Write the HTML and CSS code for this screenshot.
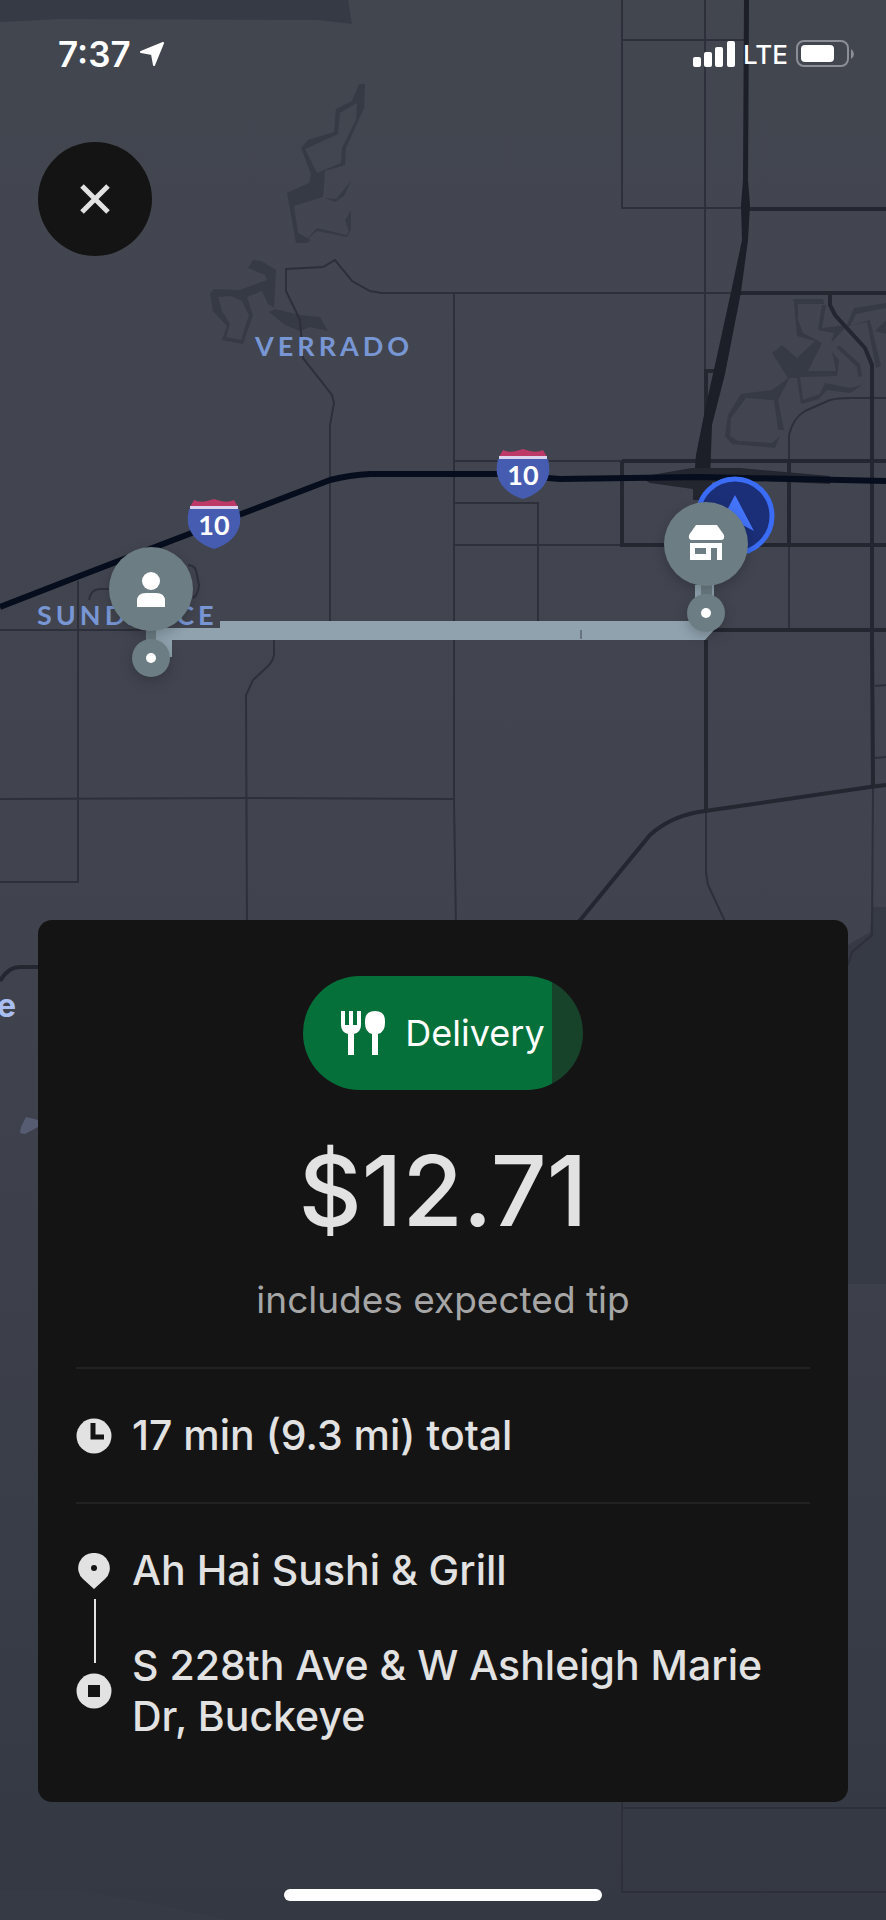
FILE: index.html
```html
<!DOCTYPE html>
<html lang="en">
<head>
  <meta charset="UTF-8">
  <title>Delivery offer</title>
  <meta name="viewport" content="width=device-width, initial-scale=1">
  <link rel="stylesheet" href="styles.css">
</head>
<body>
  <div class="screen">

    <svg class="map" viewBox="0 0 886 1920" preserveAspectRatio="xMidYMin slice" role="img" aria-label="Route map">
      <defs>
        <linearGradient id="ground" x1="0" y1="0" x2="0" y2="1">
          <stop offset="0" stop-color="#42464f"/>
          <stop offset="0.45" stop-color="#41444f"/>
          <stop offset="0.8" stop-color="#393d47"/>
          <stop offset="1" stop-color="#343842"/>
        </linearGradient>
        <symbol id="shield" viewBox="0 0 54 54" overflow="visible">
          <path d="M3 8 L7 1 Q13 4 20 2 Q24 1 27 0 Q30 1 34 2 Q41 4 47 1 L51 8z" fill="#bd3a68"/>
          <path d="M3 7H51V10H3z" fill="#dcd3ee"/>
          <path d="M2 10H52Q54 18 53 25Q49 43 27 50Q5 43 1 25Q0 18 2 10z" fill="#465cb1"/>
          <text x="27" y="36" class="shield-text">10</text>
        </symbol>
      </defs>
      <rect width="886" height="1920" fill="url(#ground)"/>

      <!-- parks and hills -->
      <g class="land">
        <path d="M0 0H348L352 24L318 20L60 19L0 22z"/>
        <path d="M0 1891H85L150 1903L230 1920H0z"/>
        <path d="M872 907H886V1284H848V945L870 932z"/>
        <path d="M359 84L365 84L364 108L346 148L345 165L325 171L323 197L294 206L298 233L311 240L307 243L296 243L287 193L309 183L311 174L301 148L308 140L334 132L336 109L352 101zM357 103L340 113L338 134L305 149L317 173L341 163L342 148L356 120z" fill-rule="evenodd"/>
        <path d="M306 240L317 231L347 237L351 230V210L345 220L349 232L346 235L317 228zM325 198L336 199L351 181L344 196L335 202z"/>
        <path d="M248 268L253 260L261 261L276 270L274 308L268 304L262 291L247 297L253 315L243 344L222 340L227 326L213 311L210 293L214 289L240 290L267 280L265 275zM218 297L222 311L230 324L226 337L241 340L249 315L242 301L231 296z" fill-rule="evenodd"/>
        <path d="M269 312L275 309L300 315L320 317L328 331L310 327L300 331L285 325z"/>
        <path d="M772 353L782 345L797 358L815 341L797 336L794 303L793 299H823L824 304H798V320L803 333L822 343L808 371L836 371L832 352L839 360L837 376L800 377L803 400L820 394L825 383L850 388L862 385L850 393L827 390L819 399L801 404L797 378L788 378z"/>
        <path d="M790 377L778 400L784 430L778 430L774 400L746 398L731 418L730 436L738 441L772 443L780 436L775 448L732 444L725 436L728 415L741 394L772 390z"/>
        <path d="M822 305L818 330L834 333L831 343L846 327L867 322L876 368L881 366L870 320L866 321L850 326L856 314L886 308V303L854 308L847 325L822 328L826 305zM836 347L857 367L858 377L862 376L860 364L840 346zM875 331L886 320V334z"/>
      </g>
      <path d="M26 1117L38 1120V1127L25 1134L20 1133L21 1127z" fill="#565c72"/>

      <!-- streets -->
      <g class="street">
        <path d="M622 0V208H745M622 40H746M705 0V292M705 292V372"/>
        <path d="M736 293H381L370 291L352 281L335 260L323 267L286 269V291L300 320L303 358L332 395L334 403L330 425V621"/>
        <path d="M454 293V800L456 930M454 461H622M454 503H538V621M454 545H622"/>
        <path d="M0 630H150M78 581V882H0M0 799L247 798L454 799"/>
        <path d="M274 640V655Q273 661 268 666L253 680L246 695L247 930"/>
        <path d="M789 630V435Q793 418 805 411L830 400Q838 398 850 398H886"/>
        <path d="M89 600Q91 589 100 589H110M188 565Q196 565 197 575L199 585Q198 595 193 598"/>
        <path d="M875 686L886 685M875 758L886 757M873 786L872 935L852 952L848 965"/>
        <path d="M706 812V873L708 885L729 930"/>
        <path d="M622 1790V1892H886M622 1808H886"/>
      </g>
      <g class="road">
        <path d="M745 209H886M740 293H886"/>
        <path d="M830 293V305L835 315L865 348L872 365V640L873 786"/>
        <path d="M622 461H886M622 461V545H886M789 461V545M706 630H886"/>
        <path d="M706 640V811M886 785L870 787L705 811Q672 815 650 835L572 930"/>
        <path d="M722 371H706V425L703 455"/>
        <path d="M0 981Q8 967 20 967H40"/>
      </g>
      <path d="M744 0H749L748 180L750 205L748 240L741 292L725 374L712 425L710 480H694L696 455L706 405L715 365L731 292L742 240L741 205L743 180z" fill="#1c1e28"/>
      <path d="M640 477L692 468H740L830 476V484L740 480L712 482V500H693V489L650 483z" fill="#23252f"/>
      <path class="freeway" d="M0 607L77 577L330 480Q350 475 370 474H498L560 479L700 477L886 481"/>

      <!-- labels and route -->
      <text x="255" y="356" class="area">VERRADO</text>
      <path d="M220 621H690L695 610V585H714V630L705 640H172V657H158L154 628H220z" fill="#8fa2ae"/>
      <path d="M581 630V639" stroke="#41454f"/>
      <text x="37" y="625" class="area">SUNDANCE</text>
      <text x="16" y="1017" class="city">e</text>
      <use href="#shield" x="187" y="499" width="54" height="54"/>
      <use href="#shield" x="496" y="449" width="54" height="54"/>

      <!-- driver -->
      <circle cx="735" cy="516" r="37" fill="#1b2f78" stroke="#3a6cf5" stroke-width="5"/>
      <path d="M735 495L754 531L735 521L716 531z" fill="#4474fb"/>

      <!-- customer pin -->
      <g fill="#6c7d83">
        <path d="M146 625H156V645H146z"/>
        <circle class="pin" cx="151" cy="589" r="42"/>
        <circle class="pin" cx="151" cy="658" r="19"/>
      </g>
      <g fill="#fff">
        <circle cx="151" cy="658" r="5"/>
        <circle cx="151" cy="581" r="9"/>
        <path d="M137 607V601Q137 593 146 593H156Q165 593 165 601V607z"/>
      </g>

      <!-- restaurant pin -->
      <g fill="#6c7d83">
        <path d="M701 580H712V600H701z"/>
        <circle class="pin" cx="706" cy="544" r="42"/>
        <circle class="pin" cx="706" cy="613" r="19"/>
      </g>
      <g fill="#fff">
        <circle cx="706" cy="613" r="5"/>
        <path d="M696 525H717L724 535Q725 540 721 540H692Q688 540 689 535z"/>
        <path d="M690 543H722V560H717V548H711V560H690zM695 548V554H706V548z" fill-rule="evenodd"/>
      </g>
    </svg>

    <header class="status">
      <div class="status-left">
        <span class="time">7:37</span>
        <svg width="26" height="26" viewBox="0 0 26 26"><path d="M24 2L2 11L13 13L15 24z" fill="#fff" stroke="#fff" stroke-width="2" stroke-linejoin="round"/></svg>
      </div>
      <div class="status-right">
        <svg width="42" height="26" viewBox="0 0 42 26" fill="#fff">
          <rect x="0" y="16" width="8" height="10" rx="2"/>
          <rect x="11" y="11" width="8" height="15" rx="2"/>
          <rect x="22" y="6" width="8" height="20" rx="2"/>
          <rect x="34" y="0" width="8" height="26" rx="2"/>
        </svg>
        <span class="network">LTE</span>
        <svg width="58" height="28" viewBox="0 0 58 28">
          <rect x="1" y="1" width="51" height="25" rx="7" fill="none" stroke="#8b8e96" stroke-width="2"/>
          <rect x="5" y="5" width="33" height="17" rx="4" fill="#fff"/>
          <path d="M55 9Q58 11 58 14Q58 17 55 19z" fill="#8b8e96"/>
        </svg>
      </div>
    </header>

    <button class="close" type="button" aria-label="Close">
      <svg width="30" height="30" viewBox="0 0 30 30"><path d="M2 2L28 28M28 2L2 28" stroke="#e2e2e2" stroke-width="5"/></svg>
    </button>

    <main class="card">
      <div class="summary">
        <button class="pill" type="button">
          <svg width="44" height="44" viewBox="0 0 44 44" fill="#fff">
            <path d="M0 0H4V14H8V0H12V14H16V0H20V14Q20 21 13 23V44H7V23Q0 21 0 14z"/>
            <path d="M34 0Q44 0 44 10V12Q44 21 37 23V44H31V23Q24 21 24 12V10Q24 0 34 0z"/>
          </svg>
          <span>Delivery</span>
        </button>
        <h1 class="price">$12.71</h1>
        <p class="note">includes expected tip</p>
      </div>

      <div class="row">
        <svg class="icon" width="36" height="36" viewBox="0 0 36 36">
          <circle cx="18" cy="18" r="17.5" fill="#e2e2e2"/>
          <path d="M17 5V19H28" fill="none" stroke="#141414" stroke-width="5"/>
        </svg>
        <span>17 min (9.3 mi) total</span>
      </div>

      <ol class="stops">
        <li class="stop">
          <svg class="icon" width="36" height="36" viewBox="0 0 36 36">
            <path d="M18 0A15 15 0 0 1 29 26L18 36L7 26A15 15 0 0 1 18 0z" fill="#e2e2e2"/>
            <circle cx="18" cy="15" r="3" fill="#141414"/>
          </svg>
          <span>Ah Hai Sushi &amp; Grill</span>
        </li>
        <li class="stop">
          <svg class="icon" width="36" height="36" viewBox="0 0 36 36">
            <circle cx="18" cy="18" r="17.5" fill="#e2e2e2"/>
            <path d="M12 12H24V24H12z" fill="#141414"/>
          </svg>
          <span>S 228th Ave &amp; W Ashleigh Marie Dr, Buckeye</span>
        </li>
      </ol>
    </main>

    <div class="home-bar"></div>
  </div>
</body>
</html>
```
FILE: styles.css
```css
* {
  box-sizing: border-box;
}
body {
  margin: 0;
  background: #363a44;
  color: #e2e2e2;
  font-family: Inter, "Liberation Sans", sans-serif;
}
.screen {
  position: relative;
  display: flex;
  flex-direction: column;
  min-height: 100vh;
  overflow: hidden;
}

/* map */
.map {
  position: absolute;
  top: 0;
  left: 0;
  width: 100%;
  height: 100%;
  z-index: -1;
}
.land {
  fill: #363a45;
}
.street {
  fill: none;
  stroke: #2d2f3a;
  stroke-width: 2;
}
.road {
  fill: none;
  stroke: #242630;
  stroke-width: 4;
}
.freeway {
  fill: none;
  stroke: #060d1d;
  stroke-width: 6;
}
.area {
  font: 700 27px Lato, sans-serif;
  letter-spacing: 4px;
  fill: #7896d4;
}
.city {
  font: 700 32px Inter, sans-serif;
  text-anchor: end;
  fill: #a9bff2;
}
.shield-text {
  font: 700 27px Lato, sans-serif;
  text-anchor: middle;
  fill: #fff;
}
.pin {
  filter: drop-shadow(0 4px 6px rgba(0,0,0,0.2));
}

/* status bar */
.status {
  display: flex;
  justify-content: space-between;
  align-items: center;
  height: 108px;
  padding: 0 32px 0 58px;
  color: #fff;
}
.status-left, .status-right {
  display: flex;
  align-items: center;
  gap: 8px;
}
.time {
  font-size: 35px;
  font-weight: 600;
}
.network {
  font-size: 26px;
  font-weight: 500;
}

.close {
  display: flex;
  align-items: center;
  justify-content: center;
  width: 114px;
  height: 114px;
  margin: 34px 0 40px 38px;
  border: none;
  border-radius: 50%;
  background: #141414;
  cursor: pointer;
}

/* offer card */
.card {
  margin: auto 38px 0;
  padding: 56px 38px 60px;
  border-radius: 14px;
  background: #141414;
}
.summary {
  display: flex;
  flex-direction: column;
  align-items: center;
  padding-bottom: 42px;
}
.pill {
  display: flex;
  align-items: center;
  gap: 20px;
  height: 114px;
  padding: 0 38px;
  border: none;
  border-radius: 57px;
  background: linear-gradient(to right, #06703a 89%, #18432b 89%);
  color: #fff;
  font-family: inherit;
  font-size: 36px;
  cursor: pointer;
}
.price {
  margin: 41px 0 24px;
  font-size: 98px;
  font-weight: 500;
  line-height: 120px;
}
.note {
  margin: 0;
  color: #a6a6a6;
  font-size: 37px;
  line-height: 50px;
}
.row, .stops {
  border-top: 2px solid #222;
  font-size: 41px;
  font-weight: 500;
  line-height: 51px;
}
.row, .stop {
  display: flex;
  align-items: center;
  gap: 20px;
}
.row {
  padding: 41px 0;
}
.icon {
  flex: none;
}
.stops {
  list-style: none;
  display: flex;
  flex-direction: column;
  gap: 44px;
  margin: 0;
  padding: 41px 0 0;
}
.stop {
  position: relative;
}
/* connector between the two stops */
.stop + .stop::before {
  content: "";
  position: absolute;
  left: 18px;
  top: -41px;
  width: 2px;
  height: 64px;
  background: #e2e2e2;
}

.home-bar {
  width: 318px;
  height: 12px;
  margin: 87px auto 19px;
  border-radius: 6px;
  background: #fff;
}
```
